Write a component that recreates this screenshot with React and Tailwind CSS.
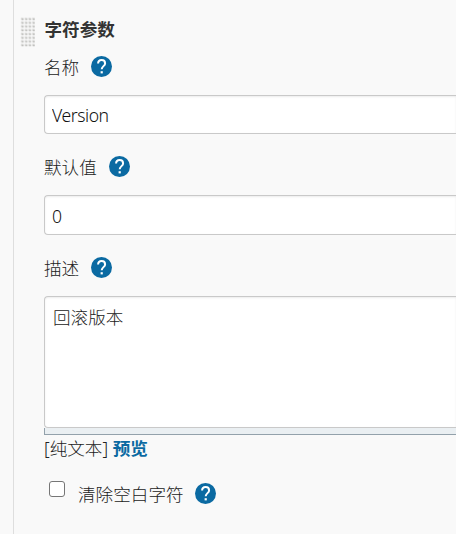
import React from "react";

function HelpIcon() {
  return (
    <svg className="size-[21px] shrink-0" viewBox="0 0 21 21" role="img" aria-label="help">
      <circle cx="10.5" cy="10.5" r="10.5" fill="#0b6aa2" />
      <path
        d="M7.1 7.6c0-2.2 1.4-3.5 3.5-3.5s3.5 1.3 3.5 3.3c0 2.6-3.4 2.9-3.4 5.8"
        fill="none"
        stroke="#fff"
        strokeWidth="2"
      />
      <rect x="9.6" y="15.2" width="2.2" height="2.2" fill="#fff" />
    </svg>
  );
}

function Label({ text, className }) {
  return (
    <div className={`flex h-[26px] items-center ${className}`}>
      <span className="pt-px">{text}</span>
      <HelpIcon />
    </div>
  );
}

function Grip() {
  return (
    <svg className="mt-[17px] h-[30px] w-[15px] shrink-0" viewBox="0 0 15 30" aria-hidden="true">
      <defs>
        <pattern id="grip" width="3.75" height="3.75" patternUnits="userSpaceOnUse">
          <rect x="0.8" y="0.6" width="2.6" height="2.4" fill="#dededc" />
          <rect x="1.8" y="1.5" width="1.6" height="1.5" fill="#bcbcba" />
        </pattern>
      </defs>
      <rect width="15" height="30" fill="url(#grip)" />
    </svg>
  );
}

const field =
  "block w-full rounded-l-[4px] border border-r-0 border-[#c9c9c9] bg-white outline-none shadow-[inset_0_1px_2px_rgba(0,0,0,0.08)]";

export default function App() {
  return (
    <div className="flex h-[534px] w-[456px] overflow-hidden bg-[#f9f9f9] font-['Noto_Sans','Noto_Sans_CJK_SC',sans-serif] text-[17.6px] leading-[26px] font-light text-[#222]">
      <div className="w-[13px] shrink-0" />
      <div className="flex min-w-0 flex-1 border-l border-[#dedede] pl-[6px]">
        <Grip />
        <div className="ml-[9px] min-w-0 flex-1 pt-[16px]">
          <div className="h-[26px] pl-[0.5px] font-bold text-[#333]">字符参数</div>
          <Label text="名称" className="mt-[11px] gap-[11.8px]" />
          <input
            className={`${field} mt-[16px] h-[39px] pt-px pl-[7px] tracking-[-0.45px] text-[#111]`}
            defaultValue="Version"
          />
          <Label text="默认值" className="mt-[19px] gap-[12px]" />
          <input
            className={`${field} mt-[16px] h-[40px] pt-[2px] pl-[7px] text-[#111]`}
            defaultValue="0"
          />
          <Label text="描述" className="mt-[19px] gap-[11.8px]" />
          <textarea
            className={`${field} mt-[16px] h-[132px] resize-none overflow-hidden pt-[7px] pl-[8px]`}
            defaultValue="回滚版本"
          />
          <div className="h-[7px] border-b border-l border-[#93a1ab] bg-[#eaeff2]" />
          <div className="h-[26px] whitespace-nowrap">
            [纯文本] <span className="font-bold text-[#0b6aa2]">预览</span>
          </div>
          <div className="mt-[19px] flex pl-[5px]">
            <input
              type="checkbox"
              className="mt-px size-4 appearance-none rounded-[3px] border border-[#767676] bg-white"
            />
            <Label text="清除空白字符" className="ml-[13px] gap-[11px]" />
          </div>
        </div>
      </div>
    </div>
  );
}
